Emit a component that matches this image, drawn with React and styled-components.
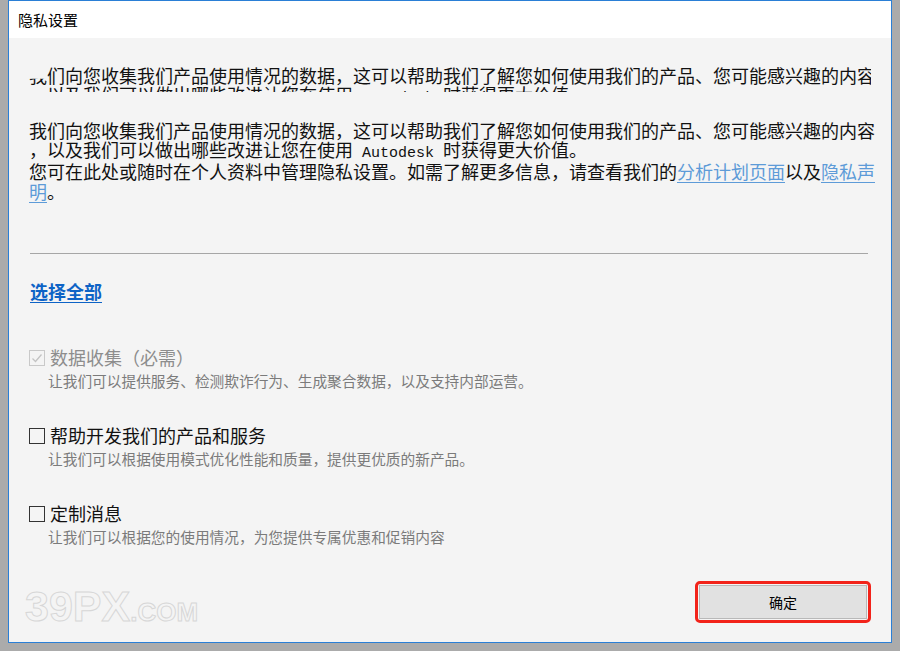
import React from "react";
import styled, { createGlobalStyle } from "styled-components";

const Global = createGlobalStyle`
  html, body {
    margin: 0;
    padding: 0;
    background: #ababab;
    font-family: "Noto Sans CJK SC", "Noto Sans", sans-serif;
  }
`;

const Page = styled.div`
  width: 900px;
  height: 651px;
  padding-left: 8px;
  box-sizing: border-box;
  overflow: hidden;
`;

const Window = styled.div`
  position: relative;
  width: 884px;
  height: 643px;
  box-sizing: border-box;
  border: 1px solid #2a7fd6;
  display: flex;
  flex-direction: column;
  background: #f4f4f4;
`;

const TitleBar = styled.div`
  height: 37px;
  background: #ffffff;
  display: flex;
  align-items: center;
  padding-left: 9px;
  font-size: 15px;
  color: #000;
`;

const Body = styled.div`
  flex: 1;
  display: flex;
  flex-direction: column;
  padding: 0 20px 19px 20px;
`;

const Para = styled.div`
  font-size: 18px;
  line-height: ${(p) => p.$lh || 19}px;
  color: #111;
  white-space: nowrap;
  margin-top: ${(p) => p.$mt || 0}px;
`;

const Clipped = styled(Para)`
  height: 26px;
  overflow: hidden;
`;

const Line = styled.span`
  display: block;
  height: 1lh;
  overflow: visible;
`;

const CutChar = styled.span`
  clip-path: inset(64% 0 0 0);
`;

const Mono = styled.span`
  font-family: "Liberation Mono", monospace;
  font-size: 15px;
  line-height: 0;
  white-space: pre;
`;

const Link = styled.a`
  color: #5d9bd8;
  text-decoration: underline;
  text-underline-offset: 3px;
`;

const Divider = styled.hr`
  border: none;
  border-top: 1px solid #a6a6a6;
  margin: 52px 3px 0 1px;
`;

const SelectAll = styled.a`
  display: inline-block;
  align-self: flex-start;
  margin-top: 27px;
  margin-left: 1px;
  font-size: 18px;
  line-height: 20px;
  font-weight: 700;
  color: #0d63c6;
  text-decoration: underline;
  text-underline-offset: 3px;
`;

const Option = styled.div`
  display: flex;
  flex-direction: column;
  margin-top: ${(p) => p.$mt}px;
`;

const OptionRow = styled.div`
  display: flex;
  align-items: center;
  gap: 5px;
  font-size: 18px;
  line-height: 20px;
  color: ${(p) => (p.$disabled ? "#8d8d8d" : "#111")};
`;

const Box = styled.span`
  width: 14px;
  height: 14px;
  border: 1px solid ${(p) => (p.$disabled ? "#c9c9c9" : "#333")};
  display: flex;
  align-items: center;
  justify-content: center;
  margin-top: 1px;
`;

const Desc = styled.div`
  margin-left: 19px;
  margin-top: 4px;
  font-size: 14.7px;
  line-height: 20px;
  color: #7b7b7b;
`;

const Footer = styled.div`
  margin-top: auto;
  display: flex;
  justify-content: flex-end;
`;

const Highlight = styled.div`
  border: 3px solid #f2231a;
  border-radius: 5px;
  padding: 1px;
`;

const Button = styled.button`
  width: 168px;
  height: 34px;
  background: #e1e1e1;
  border: 1px solid #b8b8b8;
  font-family: "Noto Sans CJK SC", sans-serif;
  font-size: 14px;
  color: #000;
`;

const Watermark = styled.div`
  position: absolute;
  left: 16px;
  bottom: 14px;
  font-family: "Liberation Sans", sans-serif;
  font-weight: 700;
  color: transparent;
  -webkit-text-stroke: 1px #d7d7d7;
  display: flex;
  align-items: baseline;
  line-height: 1;
`;

const Big = styled.span`
  font-size: 43px;
`;

const Small = styled.span`
  font-size: 26px;
`;

const Check = () => (
  <svg width="12" height="12" viewBox="0 0 12 12">
    <path d="M1.5 6.5 L4.5 9.5 L10.5 2.5" fill="none" stroke="#c3c3c3" strokeWidth="1.3" />
  </svg>
);

export default function App() {
  return (
    <Page>
      <Global />
      <Window>
        <TitleBar>隐私设置</TitleBar>
        <Body>
          <Clipped $mt={28}>
            <Line>
              <CutChar>我</CutChar>们向您收集我们产品使用情况的数据，这可以帮助我们了解您如何使用我们的产品、您可能感兴趣的内容
            </Line>
            <Line>
              ，以及我们可以做出哪些改进让您在使用<Mono> Autodesk </Mono>时获得更大价值。
            </Line>
          </Clipped>
          <Para $mt={29}>
            <Line>我们向您收集我们产品使用情况的数据，这可以帮助我们了解您如何使用我们的产品、您可能感兴趣的内容</Line>
            <Line>
              ，以及我们可以做出哪些改进让您在使用<Mono> Autodesk </Mono>时获得更大价值。
            </Line>
          </Para>
          <Para $mt={2} $lh={20}>
            <Line>
              您可在此处或随时在个人资料中管理隐私设置。如需了解更多信息，请查看我们的<Link>分析计划页面</Link>以及<Link>隐私声</Link>
            </Line>
            <Line>
              <Link>明</Link>。
            </Line>
          </Para>
          <Divider />
          <SelectAll>选择全部</SelectAll>
          <Option $mt={46}>
            <OptionRow $disabled>
              <Box $disabled>
                <Check />
              </Box>
              数据收集（必需）
            </OptionRow>
            <Desc>让我们可以提供服务、检测欺诈行为、生成聚合数据，以及支持内部运营。</Desc>
          </Option>
          <Option $mt={34}>
            <OptionRow>
              <Box />
              帮助开发我们的产品和服务
            </OptionRow>
            <Desc>让我们可以根据使用模式优化性能和质量，提供更优质的新产品。</Desc>
          </Option>
          <Option $mt={34}>
            <OptionRow>
              <Box />
              定制消息
            </OptionRow>
            <Desc>让我们可以根据您的使用情况，为您提供专属优惠和促销内容</Desc>
          </Option>
          <Footer>
            <Highlight>
              <Button>确定</Button>
            </Highlight>
          </Footer>
        </Body>
        <Watermark>
          <Big>39PX</Big>
          <Small>.COM</Small>
        </Watermark>
      </Window>
    </Page>
  );
}
